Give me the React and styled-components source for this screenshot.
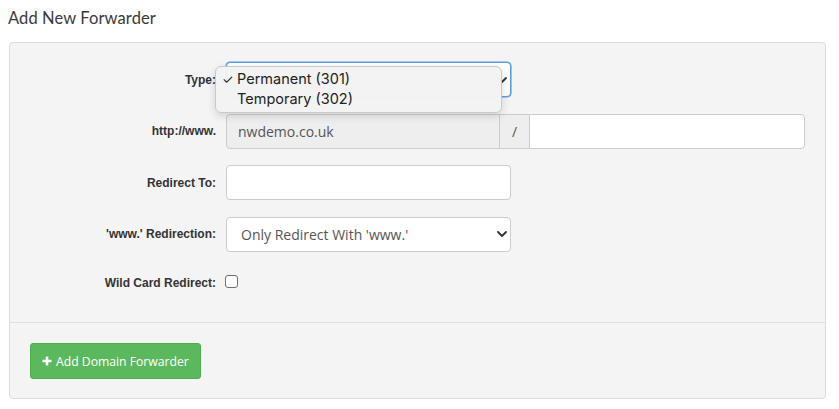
import React from "react";
import styled, { createGlobalStyle } from "styled-components";

const Global = createGlobalStyle`
  html, body { margin: 0; padding: 0; background: #fff; }
  body { font-family: "Open Sans", "Liberation Sans", sans-serif; color: #333; }
  * { box-sizing: border-box; }
`;

const Page = styled.div`
  width: 839px;
  height: 409px;
  padding: 7px 14px 0 9px;
`;

const Title = styled.h3`
  margin: 0 0 13px -1px;
  font-family: Lato, "Open Sans", sans-serif;
  font-weight: 400;
  font-size: 16.5px;
  line-height: 22px;
  color: #3a3a3a;
  letter-spacing: 0.1px;
`;

const Panel = styled.div`
  background: #f4f4f4;
  border: 1px solid #dcdcdc;
  border-radius: 4px;
  width: 817px;
`;

const Body = styled.div`
  position: relative;
  padding: 19px 20px 24px 0;
  display: flex;
  flex-direction: column;
  gap: 16.5px;
  border-bottom: 1px solid #e0e0e0;
`;

const Row = styled.div`
  display: grid;
  grid-template-columns: 206px 1fr;
  column-gap: 10px;
  align-items: center;
  min-height: ${(p) => (p.$short ? "30px" : "35px")};
`;

const Label = styled.label`
  text-align: right;
  font-family: "Liberation Sans", Arial, sans-serif;
  font-weight: 700;
  font-size: 12px;
  color: #333;
`;

const Field = styled.div`
  position: relative;
  width: 285px;
  height: 35px;
`;

const TextInput = styled.input`
  width: 100%;
  height: 35px;
  padding: 6px 12px;
  border: 1px solid #ccc;
  border-radius: ${(p) => p.$radius || "4px"};
  background: #fff;
  font-family: "Open Sans", sans-serif;
  font-size: 14px;
  color: #555;
  outline: none;
  flex: ${(p) => (p.$grow ? "1" : "none")};
`;

const Select = styled.select`
  appearance: none;
  -webkit-appearance: none;
  width: 100%;
  height: 100%;
  padding: 6px 30px 6px 14px;
  border: 1px solid ${(p) => (p.$focus ? "#5b9be6" : "#ccc")};
  box-shadow: ${(p) => (p.$focus ? "0 0 0 0.6px #5b9be6" : "none")};
  border-radius: 4px;
  background: #fff;
  font-family: "Open Sans", sans-serif;
  font-size: 14px;
  color: #555;
  outline: none;
`;

const Chevron = styled.svg`
  position: absolute;
  right: 4px;
  top: 50%;
  margin-top: -3px;
  width: 10px;
  height: 6px;
  pointer-events: none;
`;

const Group = styled.div`
  display: flex;
  width: 100%;
  height: 35px;
`;

const Addon = styled.span`
  display: flex;
  align-items: center;
  justify-content: ${(p) => (p.$center ? "center" : "flex-start")};
  width: ${(p) => p.$w};
  height: 35px;
  padding: 0 ${(p) => (p.$center ? "0" : "11px")};
  background: #eee;
  border: 1px solid #ccc;
  border-right: ${(p) => (p.$center ? "0" : "1px solid #ccc")};
  border-radius: ${(p) => (p.$first ? "4px 0 0 4px" : "0")};
  margin-right: ${(p) => (p.$first ? "-1px" : "0")};
  font-family: "Open Sans", sans-serif;
  font-size: 14px;
  color: #555;
`;

const Check = styled.input`
  width: 13px;
  height: 13px;
  margin: 0 0 0 -1px;
  appearance: none;
  -webkit-appearance: none;
  border: 1px solid #6e6e6e;
  border-radius: 3px;
  background: #fff;
  position: relative;
  top: -2px;
  display: block;
`;

const Menu = styled.div`
  position: absolute;
  left: 205px;
  top: 23px;
  width: 287px;
  height: 47px;
  padding: 2px 0 0;
  background: rgba(243, 243, 243, 0.98);
  border: 1px solid #c9c9c9;
  border-radius: 6px;
  box-shadow: 0 3px 8px rgba(0, 0, 0, 0.14);
  font-family: Inter, "Noto Sans", sans-serif;
  font-size: 14.5px;
  color: #222;
  z-index: 2;
`;

const Option = styled.div`
  position: relative;
  height: 20px;
  line-height: 20px;
  padding-left: 21px;
`;

const Tick = styled.span`
  position: absolute;
  left: 6px;
  top: 0;
  font-size: 13px;
`;

const Footer = styled.div`
  padding: 20px 20px 19px;
`;

const Button = styled.button`
  display: inline-flex;
  align-items: center;
  gap: 4px;
  height: 36px;
  padding: 0 11px;
  white-space: nowrap;
  background: #5cb85c;
  border: 1px solid #4cae4c;
  border-radius: 3px;
  color: #fff;
  font-family: "Open Sans", sans-serif;
  font-size: 12.2px;
  cursor: pointer;
`;

const ChevronIcon = () => (
  <Chevron viewBox="0 0 10 6">
    <path d="M1 1 L5 5 L9 1" fill="none" stroke="#333" strokeWidth="1.8" strokeLinecap="round" strokeLinejoin="round" />
  </Chevron>
);

const PlusIcon = () => (
  <svg width="10" height="10" viewBox="0 0 10 10">
    <path d="M5 0.5 V9.5 M0.5 5 H9.5" stroke="#fff" strokeWidth="2.6" />
  </svg>
);

export default function App() {
  return (
    <>
      <Global />
      <Page>
        <Title>Add New Forwarder</Title>
        <Panel>
          <Body>
            <Row>
              <Label>Type:</Label>
              <Field>
                <Select $focus defaultValue="301">
                  <option value="301">Permanent (301)</option>
                  <option value="302">Temporary (302)</option>
                </Select>
                <ChevronIcon />
              </Field>
            </Row>
            <Row>
              <Label>http://www.</Label>
              <Group>
                <Addon $first $w="274px">nwdemo.co.uk</Addon>
                <Addon $center $w="30px">/</Addon>
                <TextInput $grow $radius="0 4px 4px 0" />
              </Group>
            </Row>
            <Row>
              <Label>Redirect To:</Label>
              <Field>
                <TextInput />
              </Field>
            </Row>
            <Row>
              <Label>'www.' Redirection:</Label>
              <Field>
                <Select defaultValue="www">
                  <option value="www">Only Redirect With 'www.'</option>
                </Select>
                <ChevronIcon />
              </Field>
            </Row>
            <Row $short>
              <Label>Wild Card Redirect:</Label>
              <div>
                <Check type="checkbox" />
              </div>
            </Row>
            <Menu>
              <Option>
                <Tick>✓</Tick>Permanent (301)
              </Option>
              <Option>Temporary (302)</Option>
            </Menu>
          </Body>
          <Footer>
            <Button>
              <PlusIcon />
              Add Domain Forwarder
            </Button>
          </Footer>
        </Panel>
      </Page>
    </>
  );
}
